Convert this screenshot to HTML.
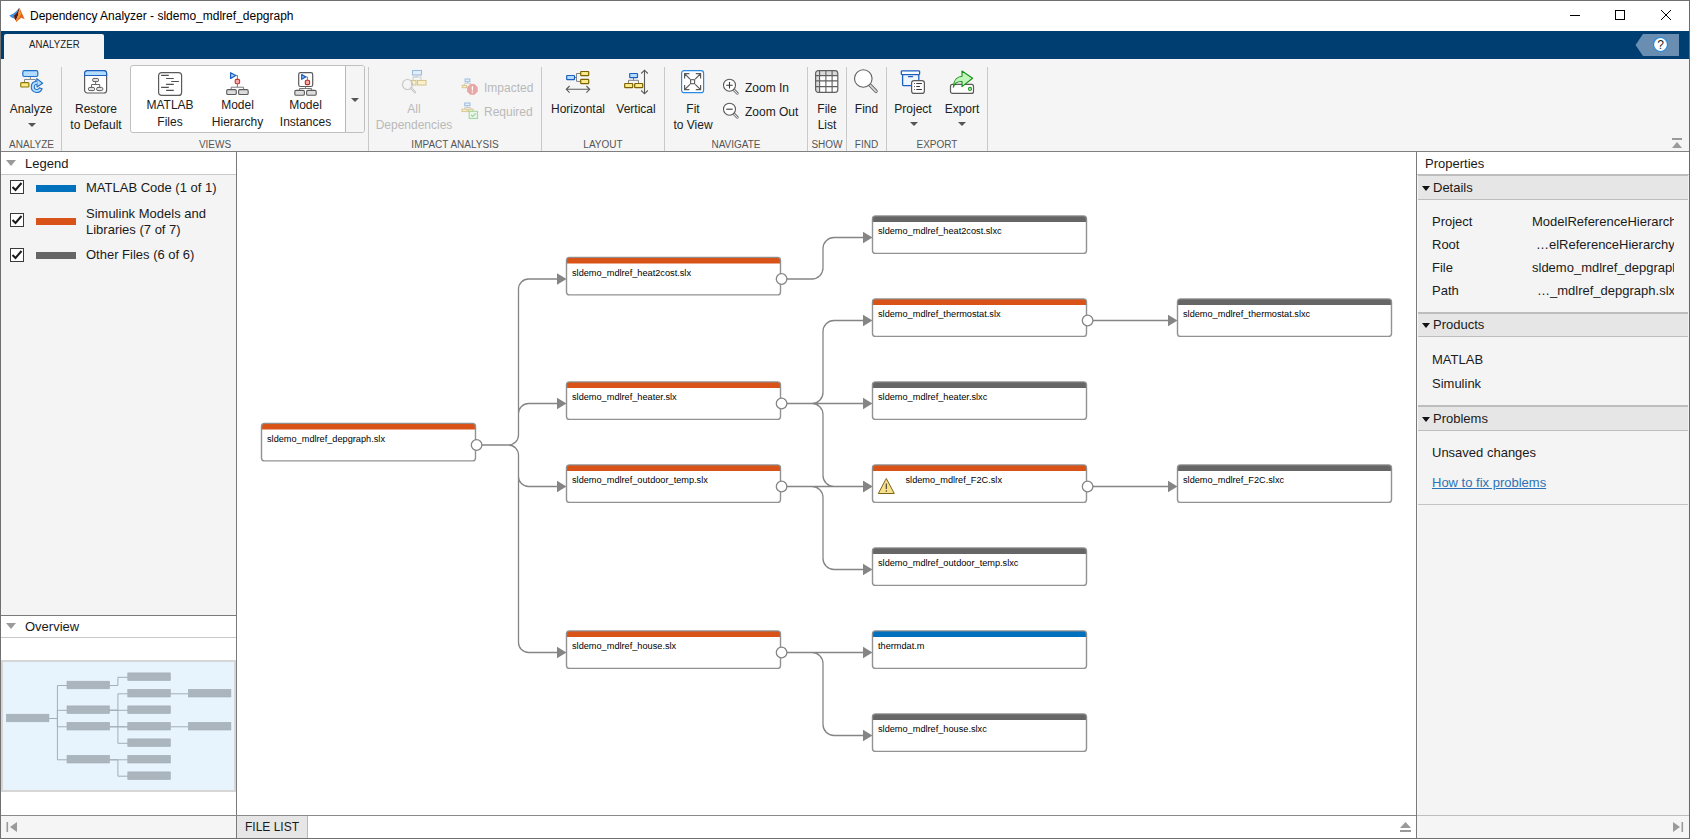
<!DOCTYPE html>
<html><head><meta charset="utf-8">
<style>
*{margin:0;padding:0;box-sizing:border-box}
html,body{width:1690px;height:839px;overflow:hidden;background:#fff}
body{position:relative;font-family:"Liberation Sans",sans-serif;color:#1a1a1a}
.a{position:absolute}
.t{position:absolute;white-space:nowrap;line-height:1}
.lbl{position:absolute;white-space:nowrap;font-size:12px;line-height:16px;text-align:center;color:#202020}
.grp{position:absolute;top:138px;font-size:10px;line-height:14px;color:#555;white-space:nowrap;text-align:center}
.sep{position:absolute;top:67px;width:1px;height:84px;background:#c9c9c9}
.dd{position:absolute;width:0;height:0;border-left:4px solid transparent;border-right:4px solid transparent;border-top:4px solid #555}
svg{position:absolute;overflow:visible}
</style></head><body>

<!-- window frame -->
<div class="a" style="left:0;top:0;width:1690px;height:839px;border:1px solid #707070;border-right-color:#6a6a6a"></div>

<!-- title bar -->
<svg style="left:6px;top:4px" width="24" height="22" viewBox="0 0 24 22">
 <polygon points="3.3,11.4 7.5,9.6 10.5,7 12.9,4.3 11,8.6 8,11.6 8.4,14.6 5.5,13.6" fill="#3d8fdb"/>
 <polygon points="8,11.6 11,8.6 12.9,4.3 13.5,3.8 12,11.5 9.8,16.5 8.4,14.6" fill="#5a1a1a"/>
 <polygon points="13.5,3.8 18.7,15.3 15.2,13.8 10.2,17.9 9.8,16.5 12,11.5" fill="#e3641e"/>
 <polygon points="13.5,3.8 15,10 12.8,14.2 10.2,17.9 12,11.5" fill="#f09a35"/>
</svg>
<div class="t" style="left:30px;top:10px;font-size:12px;color:#000">Dependency Analyzer - sldemo_mdlref_depgraph</div>
<div class="a" style="left:1570px;top:15px;width:10px;height:1px;background:#000"></div>
<div class="a" style="left:1615px;top:10px;width:10px;height:10px;border:1px solid #000"></div>
<svg style="left:1661px;top:10px" width="10" height="10"><path d="M0,0L10,10M10,0L0,10" stroke="#000" stroke-width="1"/></svg>

<!-- blue band -->
<div class="a" style="left:1px;top:31px;width:1688px;height:28px;background:#003e72"></div>
<div class="a" style="left:4px;top:34px;width:100px;height:25px;background:#f5f5f5;border-radius:2px 2px 0 0"></div>
<div class="t" style="left:29px;top:39.3px;font-size:11px;letter-spacing:0.1px;color:#222;transform:scaleX(0.875);transform-origin:0 0">ANALYZER</div>
<svg style="left:1635px;top:34px" width="44" height="23"><polygon points="0.5,11 8,0 44,0 44,22 8,22" fill="#6a8eb1"/>
 <circle cx="25.5" cy="10.5" r="7" fill="#fff" stroke="#1e88e5" stroke-width="1.2"/>
 <text x="25.5" y="15" font-size="12" text-anchor="middle" fill="#222" font-family="Liberation Sans">?</text></svg>

<!-- toolstrip -->
<div class="a" style="left:1px;top:59px;width:1688px;height:92px;background:#f5f5f5"></div>
<div class="a" style="left:1px;top:151px;width:1688px;height:1px;background:#808080"></div>


<!-- separators -->
<div class="sep" style="left:61px"></div>
<div class="sep" style="left:368px"></div>
<div class="sep" style="left:541px"></div>
<div class="sep" style="left:664px"></div>
<div class="sep" style="left:807px"></div>
<div class="sep" style="left:846px"></div>
<div class="sep" style="left:886px"></div>
<div class="sep" style="left:987px"></div>

<!-- group labels -->
<div class="grp" style="left:1px;width:61px">ANALYZE</div>
<div class="grp" style="left:62px;width:306px">VIEWS</div>
<div class="grp" style="left:369px;width:172px">IMPACT ANALYSIS</div>
<div class="grp" style="left:542px;width:122px">LAYOUT</div>
<div class="grp" style="left:665px;width:142px">NAVIGATE</div>
<div class="grp" style="left:808px;width:38px">SHOW</div>
<div class="grp" style="left:847px;width:39px">FIND</div>
<div class="grp" style="left:887px;width:100px">EXPORT</div>

<!-- gallery -->
<div class="a" style="left:130px;top:65px;width:235px;height:68px;background:#fff;border:1px solid #c0c0c0;border-radius:3px"></div>
<div class="a" style="left:345px;top:66px;width:19px;height:66px;background:#f5f5f5;border-left:1px solid #b8b8b8;border-radius:0 2px 2px 0"></div>
<div class="dd" style="left:351px;top:98px"></div>

<!-- labels -->
<div class="lbl" style="left:1px;width:60px;top:101px;line-height:16px">Analyze</div>
<div class="dd" style="left:28px;top:123px"></div>
<div class="lbl" style="left:66px;width:60px;top:101px;line-height:16px">Restore<br>to Default</div>
<div class="lbl" style="left:140px;width:60px;top:97px;line-height:16.5px">MATLAB<br>Files</div>
<div class="lbl" style="left:204px;width:67px;top:97px;line-height:16.5px">Model<br>Hierarchy</div>
<div class="lbl" style="left:272px;width:67px;top:97px;line-height:16.5px">Model<br>Instances</div>
<div class="lbl" style="left:374px;width:80px;top:101px;line-height:16px;color:#b9b9b9">All<br>Dependencies</div>
<div class="lbl" style="left:484px;top:80px;text-align:left;color:#b9b9b9">Impacted</div>
<div class="lbl" style="left:484px;top:104px;text-align:left;color:#b9b9b9">Required</div>
<div class="lbl" style="left:548px;width:60px;top:101px;line-height:16px">Horizontal</div>
<div class="lbl" style="left:610px;width:52px;top:101px;line-height:16px">Vertical</div>
<div class="lbl" style="left:668px;width:50px;top:101px;line-height:16px">Fit<br>to View</div>
<div class="lbl" style="left:745px;top:80px;text-align:left">Zoom In</div>
<div class="lbl" style="left:745px;top:104px;text-align:left">Zoom Out</div>
<div class="lbl" style="left:808px;width:38px;top:101px;line-height:16px">File<br>List</div>
<div class="lbl" style="left:847px;width:39px;top:101px;line-height:16px">Find</div>
<div class="lbl" style="left:888px;width:50px;top:101px;line-height:16px">Project</div>
<div class="dd" style="left:910px;top:122px"></div>
<div class="lbl" style="left:937px;width:50px;top:101px;line-height:16px">Export</div>
<div class="dd" style="left:958px;top:122px"></div>

<!-- collapse -->
<div class="a" style="left:1672px;top:138px;width:10px;height:2px;background:#9a9a9a"></div>
<div class="a" style="left:1672px;top:142px;width:0;height:0;border-left:5px solid transparent;border-right:5px solid transparent;border-bottom:6px solid #9a9a9a"></div>

<!-- icons -->
<svg style="left:16px;top:66px" width="32" height="32" viewBox="0 0 32 32">
 <path d="M14.4,10.5V13.5H8.5V16.5M14.4,13.5H19.5V16" fill="none" stroke="#8a8a8a" stroke-width="1"/>
 <rect x="6.8" y="4.7" width="15" height="5.8" rx="1.5" fill="#b3ddff" stroke="#1f6fc5" stroke-width="1.2"/>
 <rect x="4.7" y="16.6" width="8.2" height="4.4" rx="1" fill="#fbeb8a" stroke="#8b7400" stroke-width="1.1"/>
 <path d="M20.5,15.2A5.6,5.6 0 1 0 26.1,22.8L23.2,21.9A2.6,2.6 0 1 1 20.5,18.3Z" fill="#b3ddff" stroke="#1f6fc5" stroke-width="1.1" stroke-linejoin="round"/>
 <polygon points="20.8,12.6 26.6,17.3 21,21" fill="#b3ddff" stroke="#1f6fc5" stroke-width="1.1" stroke-linejoin="round"/>
 <path d="M20.6,15.6V17.8" stroke="#b3ddff" stroke-width="1.3"/>
</svg>
<svg style="left:84px;top:70px" width="24" height="24" viewBox="0 0 24 24">
 <rect x="0.6" y="0.6" width="22" height="22.4" rx="2.8" fill="#fff" stroke="#5a5a5a" stroke-width="1.2"/>
 <path d="M0.6,5.5V3.4A2.8,2.8 0 0 1 3.4,0.6H19.8A2.8,2.8 0 0 1 22.6,3.4V5.5Z" fill="#b3ddff" stroke="#1f5fbf" stroke-width="1.2"/>
 <rect x="8.6" y="8.4" width="6" height="3.2" rx="1.4" fill="#e4e4e4" stroke="#5a5a5a" stroke-width="1"/>
 <path d="M11.6,11.6V14.5M7.5,17.4V14.5H15.7V17.4" fill="none" stroke="#6a6a6a" stroke-width="1"/>
 <rect x="4.4" y="17.4" width="6.2" height="3.2" rx="1.4" fill="#e4e4e4" stroke="#5a5a5a" stroke-width="1"/>
 <rect x="12.6" y="17.4" width="6.2" height="3.2" rx="1.4" fill="#e4e4e4" stroke="#5a5a5a" stroke-width="1"/>
</svg>
<svg style="left:158px;top:72px" width="24" height="24" viewBox="0 0 24 24">
 <rect x="0.6" y="0.6" width="23" height="22.8" rx="3" fill="#fff" stroke="#5a5a5a" stroke-width="1.2"/>
 <path d="M3.1,3.4H10.8M8.1,6.5H15.8M13.2,9.5H20.9M8.1,12.4H15.8M3.1,15.4H10.8M8.1,18.4H15.8" stroke="#505050" stroke-width="1.1"/>
</svg>
<svg style="left:226px;top:72px" width="24" height="24" viewBox="0 0 24 24">
 <path d="M10.2,3.4H11.4V7.2M11.4,12V15.2M5.2,17.3V15.2H17.6V17.3" fill="none" stroke="#7a7a7a" stroke-width="1"/>
 <polygon points="4.6,0.8 4.6,6.4 9.8,3.5" fill="#b3ddff" stroke="#1f5fbf" stroke-width="1.3" stroke-linejoin="round"/>
 <rect x="9.2" y="7.4" width="4.4" height="4.4" rx="1.2" fill="#f7a8a8" stroke="#c0392b" stroke-width="1.1"/>
 <rect x="0.7" y="17.6" width="9.6" height="4.9" rx="1.3" fill="#dcdcdc" stroke="#5a5a5a" stroke-width="1.1"/>
 <rect x="12.6" y="17.6" width="9.6" height="4.9" rx="1.3" fill="#dcdcdc" stroke="#5a5a5a" stroke-width="1.1"/>
</svg>
<svg style="left:294px;top:72px" width="24" height="24" viewBox="0 0 24 24">
 <rect x="4.7" y="0.7" width="14" height="13.8" rx="1.8" fill="#fff" stroke="#5a5a5a" stroke-width="1.2"/>
 <path d="M11.6,4.9H13.4V8.2M11.6,14.5V16.5M5.5,18.2V16.5H17.6V18.2" fill="none" stroke="#7a7a7a" stroke-width="1"/>
 <polygon points="7.7,2.6 7.7,7.3 11.6,4.9" fill="#b3ddff" stroke="#1f5fbf" stroke-width="1.3" stroke-linejoin="round"/>
 <rect x="11.3" y="8.3" width="4.3" height="4.3" rx="1.2" fill="#f7a8a8" stroke="#b03020" stroke-width="1.1"/>
 <rect x="0.8" y="18.4" width="9.6" height="4.9" rx="1.3" fill="#dcdcdc" stroke="#5a5a5a" stroke-width="1.1"/>
 <rect x="12.6" y="18.4" width="9.6" height="4.9" rx="1.3" fill="#dcdcdc" stroke="#5a5a5a" stroke-width="1.1"/>
</svg>
<svg style="left:401px;top:70px" width="26" height="26" viewBox="0 0 26 26">
 <rect x="11.5" y="0.5" width="9" height="4.5" fill="#e3effa" stroke="#9bbde0" stroke-width="1.1"/>
 <path d="M16,5V7H12V10M20,7V10M12,7H20" fill="none" stroke="#cfcfcf"/>
 <rect x="10.5" y="10.5" width="4.5" height="4.5" fill="#fbf1cc" stroke="#d6c690" stroke-width="1.1"/>
 <rect x="16.5" y="10.5" width="8.5" height="4.5" fill="#fbf1cc" stroke="#d6c690" stroke-width="1.1"/>
 <circle cx="6.5" cy="14.5" r="5" fill="none" stroke="#c4c4c4" stroke-width="1.1"/>
 <path d="M10,18L14,22.3" stroke="#c4c4c4" stroke-width="2.4" stroke-linecap="round"/>
 <path d="M10,18L14,22.3" stroke="#f0f0f0" stroke-width="0.8" stroke-linecap="round"/>
</svg>
<svg style="left:461px;top:78px" width="18" height="18" viewBox="0 0 18 18">
 <path d="M6.5,3.7V5.3M3.3,7.4V5.3H9.6V6.5" fill="none" stroke="#cfcfcf" stroke-width="1"/>
 <rect x="4.1" y="1" width="4.7" height="2.7" fill="#e3effa" stroke="#9bbde0" stroke-width="1"/>
 <rect x="1.2" y="7.4" width="4.4" height="2.3" fill="#fbf1cc" stroke="#d6c690" stroke-width="1"/>
 <polygon points="9.2,6.1 13.6,6.1 16.7,9.2 16.7,13.6 13.6,16.7 9.2,16.7 6.1,13.6 6.1,9.2" fill="#e8a6a6"/>
 <path d="M11.4,8.3V12.4M11.4,13.6V14.8" stroke="#fff" stroke-width="1.3"/>
</svg>
<svg style="left:461px;top:102px" width="18" height="18" viewBox="0 0 18 18">
 <path d="M6.3,3.7V5.5M3.5,7.2V5.5H9.7V7.2" fill="none" stroke="#cfcfcf" stroke-width="1"/>
 <rect x="3.7" y="1" width="5.3" height="2.7" fill="#e3effa" stroke="#9bbde0" stroke-width="1"/>
 <rect x="1" y="7.2" width="5.1" height="2.4" fill="#fbf1cc" stroke="#d6c690" stroke-width="1"/>
 <rect x="7.3" y="7.2" width="4.7" height="2.4" fill="#fbf1cc" stroke="#d6c690" stroke-width="1"/>
 <rect x="8.2" y="9.3" width="8.3" height="7.2" fill="#e9f6e9" stroke="#a3d6a3" stroke-width="1.1"/>
 <path d="M10,12.8L11.8,14.5L14.8,11.3" fill="none" stroke="#9ad09a" stroke-width="1.1"/>
</svg>
<svg style="left:565px;top:70px" width="26" height="24" viewBox="0 0 26 24">
 <path d="M9.6,7.5H11.5M11.5,3.5V11.4M11.5,3.5H15.2M11.5,11.4H15.2" fill="none" stroke="#808080" stroke-width="1"/>
 <rect x="1.7" y="5.5" width="7.8" height="4.2" rx="0.6" fill="#b3ddff" stroke="#1f5fbf" stroke-width="1.2"/>
 <rect x="15.7" y="1.5" width="8" height="4.2" rx="0.6" fill="#fbe98a" stroke="#7a6300" stroke-width="1.2"/>
 <rect x="15.7" y="9.4" width="8" height="4.2" rx="0.6" fill="#fbe98a" stroke="#7a6300" stroke-width="1.2"/>
 <path d="M1.3,19.3H24.7M4.6,16L1.3,19.3L4.6,22.6M21.4,16L24.7,19.3L21.4,22.6" fill="none" stroke="#5a5a5a" stroke-width="1.1"/>
</svg>
<svg style="left:623px;top:69px" width="26" height="26" viewBox="0 0 26 26">
 <path d="M10.5,8.8V11.3M5.5,14.3V11.3H15.5V14.3" fill="none" stroke="#808080" stroke-width="1"/>
 <rect x="6.7" y="4.5" width="7.8" height="4.2" rx="0.6" fill="#b3ddff" stroke="#1f5fbf" stroke-width="1.2"/>
 <rect x="1.7" y="14.5" width="8" height="4.2" rx="0.6" fill="#fbe98a" stroke="#7a6300" stroke-width="1.2"/>
 <rect x="11.7" y="14.5" width="8" height="4.2" rx="0.6" fill="#fbe98a" stroke="#7a6300" stroke-width="1.2"/>
 <path d="M21.5,1.2V24.8M18.2,4.5L21.5,1.2L24.8,4.5M18.2,21.5L21.5,24.8L24.8,21.5" fill="none" stroke="#5a5a5a" stroke-width="1.1"/>
</svg>
<svg style="left:680px;top:70px" width="25" height="24" viewBox="0 0 25 24">
 <rect x="1.6" y="0.7" width="22" height="22" rx="2.5" fill="#fff" stroke="#2a8ae6" stroke-width="1.2"/>
 <rect x="10.6" y="9.7" width="4" height="4" fill="none" stroke="#5a5a5a" stroke-width="1.1"/>
 <path d="M4.6,3.7L10,9.1M20.6,3.7L15.2,9.1M4.6,19.7L10,14.3M20.6,19.7L15.2,14.3M4.6,8.5V3.7H9.4M15.8,3.7H20.6V8.5M4.6,14.9V19.7H9.4M15.8,19.7H20.6V14.9" fill="none" stroke="#5a5a5a" stroke-width="1.2"/>
</svg>
<svg style="left:722px;top:78px" width="18" height="18" viewBox="0 0 18 18">
 <path d="M11.8,11.8L15.3,15.3" stroke="#6a6a6a" stroke-width="2.8" stroke-linecap="round"/>
 <path d="M11.8,11.8L15.3,15.3" stroke="#e6e6e6" stroke-width="1.1" stroke-linecap="round"/>
 <circle cx="7.5" cy="7.2" r="6" fill="#fff" stroke="#5a5a5a" stroke-width="1.1"/>
 <path d="M7.5,4V10.4M4.3,7.2H10.7" stroke="#3a3a3a" stroke-width="1.1"/>
</svg>
<svg style="left:722px;top:102px" width="18" height="18" viewBox="0 0 18 18">
 <path d="M11.8,11.8L15.3,15.3" stroke="#6a6a6a" stroke-width="2.8" stroke-linecap="round"/>
 <path d="M11.8,11.8L15.3,15.3" stroke="#e6e6e6" stroke-width="1.1" stroke-linecap="round"/>
 <circle cx="7.5" cy="7.2" r="6" fill="#fff" stroke="#5a5a5a" stroke-width="1.1"/>
 <path d="M4.3,7.2H10.7" stroke="#3a3a3a" stroke-width="1.1"/>
</svg>
<svg style="left:815px;top:70px" width="24" height="24" viewBox="0 0 24 24">
 <rect x="0.6" y="0.6" width="22.2" height="21.8" rx="2.8" fill="#fff"/>
 <path d="M0.6,5.6V3.4A2.8,2.8 0 0 1 3.4,0.6H20A2.8,2.8 0 0 1 22.8,3.4V5.6Z" fill="#d9d9d9"/>
 <path d="M0.6,3.4V19.6A2.8,2.8 0 0 0 3.4,22.4H4.6V0.6H3.4A2.8,2.8 0 0 0 0.6,3.4Z" fill="#d9d9d9"/>
 <path d="M0.6,5.6H22.8M0.6,10.9H22.8M0.6,16.6H22.8M4.6,0.6V22.4M10.9,0.6V22.4M17.1,0.6V22.4" stroke="#606060" stroke-width="1.1"/>
 <rect x="0.6" y="0.6" width="22.2" height="21.8" rx="2.8" fill="none" stroke="#606060" stroke-width="1.2"/>
</svg>
<svg style="left:853px;top:68px" width="28" height="28" viewBox="0 0 28 28">
 <path d="M17,17L23,23.3" stroke="#6a6a6a" stroke-width="3.6" stroke-linecap="round"/>
 <path d="M17,17L23,23.3" stroke="#d8d8d8" stroke-width="1.8" stroke-linecap="round"/>
 <circle cx="10.3" cy="10.5" r="8.8" fill="#fff" stroke="#606060" stroke-width="1.1"/>
</svg>
<svg style="left:900px;top:70px" width="26" height="25" viewBox="0 0 26 25">
 <rect x="2.6" y="4.4" width="16.2" height="11.2" rx="0.8" fill="#f0f6fd" stroke="#1f5fbf" stroke-width="1.3"/>
 <rect x="1.3" y="0.8" width="18.3" height="3.8" rx="0.8" fill="#fff" stroke="#1f5fbf" stroke-width="1.3"/>
 <path d="M8.4,6.6H12.6" stroke="#1f5fbf" stroke-width="1.2" stroke-linecap="round"/>
 <rect x="11.6" y="10.6" width="12.8" height="12.8" rx="2.5" fill="#fff" stroke="#5a5a5a" stroke-width="1.2"/>
 <path d="M14,13.5H14.8M14,16.5H14.8M14,19.5H14.8M16.3,13.5H21.9M16.3,16.5H19.9M16.3,19.5H21.9" stroke="#3a3a3a" stroke-width="1.1"/>
</svg>
<svg style="left:949px;top:70px" width="26" height="25" viewBox="0 0 26 25">
 <rect x="1.5" y="14.4" width="23" height="9" rx="2" fill="#fff" stroke="#5a5a5a" stroke-width="1.2"/>
 <circle cx="21" cy="18.9" r="1.5" fill="#c8f0c0" stroke="#1e9a1e" stroke-width="1.1"/>
 <path d="M4.3,17.3C4.5,10 8.5,6.5 13,6.2V1L23.6,8.3L13,16.6V11.5C9,11.3 5.5,13 4.3,17.3Z" fill="#c2f5bc" stroke="#169016" stroke-width="1.1" stroke-linejoin="round"/>
</svg>



<!-- ===== left panel ===== -->
<div class="a" style="left:1px;top:152px;width:235px;height:22px;background:#fff"></div>
<div class="a" style="left:1px;top:174px;width:235px;height:1px;background:#c8c8c8"></div>
<div class="a" style="left:1px;top:175px;width:235px;height:440px;background:#f4f4f4"></div>
<div class="a" style="left:6px;top:160px;width:0;height:0;border-left:5px solid transparent;border-right:5px solid transparent;border-top:6px solid #9a9a9a"></div>
<div class="t" style="left:25px;top:157px;font-size:13px;color:#1a1a1a">Legend</div>

<div class="a" style="left:10px;top:180px;width:14px;height:14px;border:1px solid #3a3a3a;background:#fff"></div>
<svg style="left:10px;top:180px" width="14" height="14"><path d="M2.5,7L5.5,10L11.5,3" fill="none" stroke="#1a1a1a" stroke-width="2"/></svg>
<div class="a" style="left:36px;top:185px;width:40px;height:7px;background:#0072bd"></div>
<div class="t" style="left:86px;top:181px;font-size:13px">MATLAB Code (1 of 1)</div>

<div class="a" style="left:10px;top:213px;width:14px;height:14px;border:1px solid #3a3a3a;background:#fff"></div>
<svg style="left:10px;top:213px" width="14" height="14"><path d="M2.5,7L5.5,10L11.5,3" fill="none" stroke="#1a1a1a" stroke-width="2"/></svg>
<div class="a" style="left:36px;top:218px;width:40px;height:7px;background:#d95319"></div>
<div class="t" style="left:86px;top:205.5px;font-size:13px;line-height:16px">Simulink Models and<br>Libraries (7 of 7)</div>

<div class="a" style="left:10px;top:248px;width:14px;height:14px;border:1px solid #3a3a3a;background:#fff"></div>
<svg style="left:10px;top:248px" width="14" height="14"><path d="M2.5,7L5.5,10L11.5,3" fill="none" stroke="#1a1a1a" stroke-width="2"/></svg>
<div class="a" style="left:36px;top:252px;width:40px;height:7px;background:#666"></div>
<div class="t" style="left:86px;top:248px;font-size:13px">Other Files (6 of 6)</div>

<div class="a" style="left:1px;top:615px;width:235px;height:1px;background:#7a7a7a"></div>
<div class="a" style="left:1px;top:616px;width:235px;height:21px;background:#fff"></div>
<div class="a" style="left:1px;top:637px;width:235px;height:1px;background:#c8c8c8"></div>
<div class="a" style="left:6px;top:623px;width:0;height:0;border-left:5px solid transparent;border-right:5px solid transparent;border-top:6px solid #9a9a9a"></div>
<div class="t" style="left:25px;top:620px;font-size:13px;color:#1a1a1a">Overview</div>
<div class="a" style="left:1px;top:660px;width:235px;height:132px;background:#e8f4fd;border:2px solid #d6d6d6"></div>
<svg style="left:0;top:0" width="240" height="839"><path d="M48.9,718.5H57.4V685.5H67.0 M48.9,718.5H57.4V710.3H67.0 M48.9,718.5H57.4V726.8H67.0 M48.9,718.5H57.4V759.8H67.0 M109.5,685.5H117.9V677.3H127.8 M109.5,710.3H117.9V693.8H127.8 M109.5,710.3H117.9V710.3H127.8 M109.5,710.3H117.9V726.8H127.8 M109.5,726.8H117.9V726.8H127.8 M109.5,726.8H117.9V743.3H127.8 M109.5,759.8H117.9V759.8H127.8 M109.5,759.8H117.9V776.2H127.8 M170.3,693.8H188.4 M170.3,726.8H188.4" fill="none" stroke="#a3aeb7" stroke-width="1"/>
<rect x="6.4" y="714.2" width="42.5" height="7.6" fill="#aab5be" stroke="#a0abb4" stroke-width="0.6"/>
<rect x="67.0" y="681.2" width="42.5" height="7.6" fill="#aab5be" stroke="#a0abb4" stroke-width="0.6"/>
<rect x="67.0" y="705.9" width="42.5" height="7.6" fill="#aab5be" stroke="#a0abb4" stroke-width="0.6"/>
<rect x="67.0" y="722.4" width="42.5" height="7.6" fill="#aab5be" stroke="#a0abb4" stroke-width="0.6"/>
<rect x="67.0" y="755.4" width="42.5" height="7.6" fill="#aab5be" stroke="#a0abb4" stroke-width="0.6"/>
<rect x="127.8" y="672.9" width="42.5" height="7.6" fill="#aab5be" stroke="#a0abb4" stroke-width="0.6"/>
<rect x="127.8" y="689.4" width="42.5" height="7.6" fill="#aab5be" stroke="#a0abb4" stroke-width="0.6"/>
<rect x="127.8" y="705.9" width="42.5" height="7.6" fill="#aab5be" stroke="#a0abb4" stroke-width="0.6"/>
<rect x="127.8" y="722.4" width="42.5" height="7.6" fill="#aab5be" stroke="#a0abb4" stroke-width="0.6"/>
<rect x="127.8" y="738.9" width="42.5" height="7.6" fill="#aab5be" stroke="#a0abb4" stroke-width="0.6"/>
<rect x="127.8" y="755.4" width="42.5" height="7.6" fill="#aab5be" stroke="#a0abb4" stroke-width="0.6"/>
<rect x="127.8" y="771.9" width="42.5" height="7.6" fill="#aab5be" stroke="#a0abb4" stroke-width="0.6"/>
<rect x="188.4" y="689.4" width="42.5" height="7.6" fill="#aab5be" stroke="#a0abb4" stroke-width="0.6"/>
<rect x="188.4" y="722.4" width="42.5" height="7.6" fill="#aab5be" stroke="#a0abb4" stroke-width="0.6"/></svg>

<div class="a" style="left:236px;top:152px;width:1px;height:686px;background:#7a7a7a"></div>

<!-- ===== graph ===== -->
<svg style="left:0;top:0" width="1690" height="839" font-family="Liberation Sans"><path d="M475.5,445H508.5A10,10 0 0 0 518.5,435V289A10,10 0 0 1 528.5,279H557.0 M475.5,445H508.5A10,10 0 0 0 518.5,435V413.5A10,10 0 0 1 528.5,403.5H557.0 M475.5,445H508.5A10,10 0 0 1 518.5,455V476.5A10,10 0 0 0 528.5,486.5H557.0 M475.5,445H508.5A10,10 0 0 1 518.5,455V642.5A10,10 0 0 0 528.5,652.5H557.0 M780.5,279H812A11,11 0 0 0 823,268V248.5A11,11 0 0 1 834,237.5H863.0 M780.5,403.5H812A11,11 0 0 0 823,392.5V331.5A11,11 0 0 1 834,320.5H863.0 M780.5,403.5H863.0 M780.5,403.5H812A11,11 0 0 1 823,414.5V475.5A11,11 0 0 0 834,486.5H863.0 M780.5,486.5H863.0 M780.5,486.5H812A11,11 0 0 1 823,497.5V558.5A11,11 0 0 0 834,569.5H863.0 M780.5,652.5H863.0 M780.5,652.5H812A11,11 0 0 1 823,663.5V724.5A11,11 0 0 0 834,735.5H863.0 M1086.5,320.5H1168.0 M1086.5,486.5H1168.0" fill="none" stroke="#858585" stroke-width="1.3"/>
<polygon points="566.5,279 557.0,273.2 557.0,284.8" fill="#858585"/>
<polygon points="566.5,403.5 557.0,397.7 557.0,409.3" fill="#858585"/>
<polygon points="566.5,486.5 557.0,480.7 557.0,492.3" fill="#858585"/>
<polygon points="566.5,652.5 557.0,646.7 557.0,658.3" fill="#858585"/>
<polygon points="872.5,237.5 863.0,231.7 863.0,243.3" fill="#858585"/>
<polygon points="872.5,320.5 863.0,314.7 863.0,326.3" fill="#858585"/>
<polygon points="872.5,403.5 863.0,397.7 863.0,409.3" fill="#858585"/>
<polygon points="872.5,486.5 863.0,480.7 863.0,492.3" fill="#858585"/>
<polygon points="872.5,486.5 863.0,480.7 863.0,492.3" fill="#858585"/>
<polygon points="872.5,569.5 863.0,563.7 863.0,575.3" fill="#858585"/>
<polygon points="872.5,652.5 863.0,646.7 863.0,658.3" fill="#858585"/>
<polygon points="872.5,735.5 863.0,729.7 863.0,741.3" fill="#858585"/>
<polygon points="1177.5,320.5 1168.0,314.7 1168.0,326.3" fill="#858585"/>
<polygon points="1177.5,486.5 1168.0,480.7 1168.0,492.3" fill="#858585"/>
<rect x="261.5" y="423.4" width="214" height="37.5" rx="3" fill="#fff"/>
<path d="M261.5,429.5V426.4A3,3 0 0 1 264.5,423.4H472.5A3,3 0 0 1 475.5,426.4V429.5Z" fill="#d95319"/>
<rect x="261.5" y="423.4" width="214" height="37.5" rx="3" fill="none" stroke="#8c8c8c" stroke-width="1.4" stroke-opacity="0.95"/>
<text x="267.0" y="441.7" font-size="9.2" fill="#000">sldemo_mdlref_depgraph.slx</text>
<rect x="566.5" y="257.4" width="214" height="37.5" rx="3" fill="#fff"/>
<path d="M566.5,263.5V260.4A3,3 0 0 1 569.5,257.4H777.5A3,3 0 0 1 780.5,260.4V263.5Z" fill="#d95319"/>
<rect x="566.5" y="257.4" width="214" height="37.5" rx="3" fill="none" stroke="#8c8c8c" stroke-width="1.4" stroke-opacity="0.95"/>
<text x="572.0" y="275.7" font-size="9.2" fill="#000">sldemo_mdlref_heat2cost.slx</text>
<rect x="566.5" y="381.9" width="214" height="37.5" rx="3" fill="#fff"/>
<path d="M566.5,388.0V384.9A3,3 0 0 1 569.5,381.9H777.5A3,3 0 0 1 780.5,384.9V388.0Z" fill="#d95319"/>
<rect x="566.5" y="381.9" width="214" height="37.5" rx="3" fill="none" stroke="#8c8c8c" stroke-width="1.4" stroke-opacity="0.95"/>
<text x="572.0" y="400.2" font-size="9.2" fill="#000">sldemo_mdlref_heater.slx</text>
<rect x="566.5" y="464.9" width="214" height="37.5" rx="3" fill="#fff"/>
<path d="M566.5,471.0V467.9A3,3 0 0 1 569.5,464.9H777.5A3,3 0 0 1 780.5,467.9V471.0Z" fill="#d95319"/>
<rect x="566.5" y="464.9" width="214" height="37.5" rx="3" fill="none" stroke="#8c8c8c" stroke-width="1.4" stroke-opacity="0.95"/>
<text x="572.0" y="483.2" font-size="9.2" fill="#000">sldemo_mdlref_outdoor_temp.slx</text>
<rect x="566.5" y="630.9" width="214" height="37.5" rx="3" fill="#fff"/>
<path d="M566.5,637.0V633.9A3,3 0 0 1 569.5,630.9H777.5A3,3 0 0 1 780.5,633.9V637.0Z" fill="#d95319"/>
<rect x="566.5" y="630.9" width="214" height="37.5" rx="3" fill="none" stroke="#8c8c8c" stroke-width="1.4" stroke-opacity="0.95"/>
<text x="572.0" y="649.2" font-size="9.2" fill="#000">sldemo_mdlref_house.slx</text>
<rect x="872.5" y="215.9" width="214" height="37.5" rx="3" fill="#fff"/>
<path d="M872.5,222.0V218.9A3,3 0 0 1 875.5,215.9H1083.5A3,3 0 0 1 1086.5,218.9V222.0Z" fill="#666666"/>
<rect x="872.5" y="215.9" width="214" height="37.5" rx="3" fill="none" stroke="#8c8c8c" stroke-width="1.4" stroke-opacity="0.95"/>
<text x="878.0" y="234.2" font-size="9.2" fill="#000">sldemo_mdlref_heat2cost.slxc</text>
<rect x="872.5" y="298.9" width="214" height="37.5" rx="3" fill="#fff"/>
<path d="M872.5,305.0V301.9A3,3 0 0 1 875.5,298.9H1083.5A3,3 0 0 1 1086.5,301.9V305.0Z" fill="#d95319"/>
<rect x="872.5" y="298.9" width="214" height="37.5" rx="3" fill="none" stroke="#8c8c8c" stroke-width="1.4" stroke-opacity="0.95"/>
<text x="878.0" y="317.2" font-size="9.2" fill="#000">sldemo_mdlref_thermostat.slx</text>
<rect x="872.5" y="381.9" width="214" height="37.5" rx="3" fill="#fff"/>
<path d="M872.5,388.0V384.9A3,3 0 0 1 875.5,381.9H1083.5A3,3 0 0 1 1086.5,384.9V388.0Z" fill="#666666"/>
<rect x="872.5" y="381.9" width="214" height="37.5" rx="3" fill="none" stroke="#8c8c8c" stroke-width="1.4" stroke-opacity="0.95"/>
<text x="878.0" y="400.2" font-size="9.2" fill="#000">sldemo_mdlref_heater.slxc</text>
<rect x="872.5" y="464.9" width="214" height="37.5" rx="3" fill="#fff"/>
<path d="M872.5,471.0V467.9A3,3 0 0 1 875.5,464.9H1083.5A3,3 0 0 1 1086.5,467.9V471.0Z" fill="#d95319"/>
<rect x="872.5" y="464.9" width="214" height="37.5" rx="3" fill="none" stroke="#8c8c8c" stroke-width="1.4" stroke-opacity="0.95"/>
<g transform="translate(877.5,477.5)"><polygon points="8.8,1 16.8,16 0.8,16" fill="#f8e08a" stroke="#7a6518" stroke-width="1" stroke-linejoin="round"/><path d="M8.8,6V11.5M8.8,12.8V14.2" stroke="#3a3a3a" stroke-width="1.1"/></g>
<text x="905.5" y="483.2" font-size="9.2" fill="#000">sldemo_mdlref_F2C.slx</text>
<rect x="872.5" y="547.9" width="214" height="37.5" rx="3" fill="#fff"/>
<path d="M872.5,554.0V550.9A3,3 0 0 1 875.5,547.9H1083.5A3,3 0 0 1 1086.5,550.9V554.0Z" fill="#666666"/>
<rect x="872.5" y="547.9" width="214" height="37.5" rx="3" fill="none" stroke="#8c8c8c" stroke-width="1.4" stroke-opacity="0.95"/>
<text x="878.0" y="566.2" font-size="9.2" fill="#000">sldemo_mdlref_outdoor_temp.slxc</text>
<rect x="872.5" y="630.9" width="214" height="37.5" rx="3" fill="#fff"/>
<path d="M872.5,637.0V633.9A3,3 0 0 1 875.5,630.9H1083.5A3,3 0 0 1 1086.5,633.9V637.0Z" fill="#0072bd"/>
<rect x="872.5" y="630.9" width="214" height="37.5" rx="3" fill="none" stroke="#8c8c8c" stroke-width="1.4" stroke-opacity="0.95"/>
<text x="878.0" y="649.2" font-size="9.2" fill="#000">thermdat.m</text>
<rect x="872.5" y="713.9" width="214" height="37.5" rx="3" fill="#fff"/>
<path d="M872.5,720.0V716.9A3,3 0 0 1 875.5,713.9H1083.5A3,3 0 0 1 1086.5,716.9V720.0Z" fill="#666666"/>
<rect x="872.5" y="713.9" width="214" height="37.5" rx="3" fill="none" stroke="#8c8c8c" stroke-width="1.4" stroke-opacity="0.95"/>
<text x="878.0" y="732.2" font-size="9.2" fill="#000">sldemo_mdlref_house.slxc</text>
<rect x="1177.5" y="298.9" width="214" height="37.5" rx="3" fill="#fff"/>
<path d="M1177.5,305.0V301.9A3,3 0 0 1 1180.5,298.9H1388.5A3,3 0 0 1 1391.5,301.9V305.0Z" fill="#666666"/>
<rect x="1177.5" y="298.9" width="214" height="37.5" rx="3" fill="none" stroke="#8c8c8c" stroke-width="1.4" stroke-opacity="0.95"/>
<text x="1183.0" y="317.2" font-size="9.2" fill="#000">sldemo_mdlref_thermostat.slxc</text>
<rect x="1177.5" y="464.9" width="214" height="37.5" rx="3" fill="#fff"/>
<path d="M1177.5,471.0V467.9A3,3 0 0 1 1180.5,464.9H1388.5A3,3 0 0 1 1391.5,467.9V471.0Z" fill="#666666"/>
<rect x="1177.5" y="464.9" width="214" height="37.5" rx="3" fill="none" stroke="#8c8c8c" stroke-width="1.4" stroke-opacity="0.95"/>
<text x="1183.0" y="483.2" font-size="9.2" fill="#000">sldemo_mdlref_F2C.slxc</text>
<circle cx="781.6" cy="403.5" r="5.3" fill="#fff" stroke="#858585" stroke-width="1.3"/>
<circle cx="781.6" cy="652.5" r="5.3" fill="#fff" stroke="#858585" stroke-width="1.3"/>
<circle cx="1087.6" cy="486.5" r="5.3" fill="#fff" stroke="#858585" stroke-width="1.3"/>
<circle cx="476.6" cy="445" r="5.3" fill="#fff" stroke="#858585" stroke-width="1.3"/>
<circle cx="1087.6" cy="320.5" r="5.3" fill="#fff" stroke="#858585" stroke-width="1.3"/>
<circle cx="781.6" cy="279" r="5.3" fill="#fff" stroke="#858585" stroke-width="1.3"/>
<circle cx="781.6" cy="486.5" r="5.3" fill="#fff" stroke="#858585" stroke-width="1.3"/></svg>

<!-- ===== right panel ===== -->
<div class="a" style="left:1416px;top:152px;width:1px;height:663px;background:#7a7a7a"></div>
<div class="a" style="left:1417px;top:152px;width:272px;height:663px;background:#f4f4f4"></div>
<div class="a" style="left:1417px;top:152px;width:272px;height:22px;background:#fff"></div>
<div class="t" style="left:1425px;top:157px;font-size:13px">Properties</div>

<div class="a" style="left:1417px;top:174px;width:272px;height:26px;background:#e6e6e6;border-top:2px solid #bdbdbd;border-bottom:1px solid #bdbdbd"></div>
<div class="a" style="left:1422px;top:186px;width:0;height:0;border-left:4px solid transparent;border-right:4px solid transparent;border-top:5px solid #111"></div>
<div class="t" style="left:1433px;top:181px;font-size:13px">Details</div>
<div class="t" style="left:1432px;top:215px;font-size:13px">Project</div>
<div class="t" style="left:1432px;top:238px;font-size:13px">Root</div>
<div class="t" style="left:1432px;top:261px;font-size:13px">File</div>
<div class="t" style="left:1432px;top:284px;font-size:13px">Path</div>
<div class="a" style="left:1532px;top:210px;width:142px;height:100px;overflow:hidden">
 <div class="t" style="left:0;top:5px;font-size:13px">ModelReferenceHierarchy</div>
 <div class="t" style="left:4px;top:28px;font-size:13px">&hellip;elReferenceHierarchy</div>
 <div class="t" style="left:0;top:51px;font-size:13px">sldemo_mdlref_depgraph</div>
 <div class="t" style="left:5px;top:74px;font-size:13px">&hellip;_mdlref_depgraph.slx</div>
</div>

<div class="a" style="left:1417px;top:312px;width:272px;height:25px;background:#e6e6e6;border-top:2px solid #bdbdbd;border-bottom:1px solid #bdbdbd"></div>
<div class="a" style="left:1422px;top:323px;width:0;height:0;border-left:4px solid transparent;border-right:4px solid transparent;border-top:5px solid #111"></div>
<div class="t" style="left:1433px;top:318px;font-size:13px">Products</div>
<div class="t" style="left:1432px;top:353px;font-size:13px">MATLAB</div>
<div class="t" style="left:1432px;top:377px;font-size:13px">Simulink</div>

<div class="a" style="left:1417px;top:405px;width:272px;height:26px;background:#e6e6e6;border-top:2px solid #bdbdbd;border-bottom:1px solid #bdbdbd"></div>
<div class="a" style="left:1422px;top:417px;width:0;height:0;border-left:4px solid transparent;border-right:4px solid transparent;border-top:5px solid #111"></div>
<div class="t" style="left:1433px;top:412px;font-size:13px">Problems</div>
<div class="t" style="left:1432px;top:446px;font-size:13px">Unsaved changes</div>
<div class="t" style="left:1432px;top:476px;font-size:13px;color:#2b73b6;text-decoration:underline">How to fix problems</div>
<div class="a" style="left:1417px;top:504px;width:272px;height:1px;background:#c4c4c4"></div>
<div class="a" style="left:1417px;top:175px;width:1px;height:640px;background:#f8f8f8"></div>
<div class="a" style="left:1688px;top:175px;width:1px;height:640px;background:#f0f0f0"></div>

<!-- ===== status bar ===== -->
<div class="a" style="left:1px;top:815px;width:1416px;height:1px;background:#8a8a8a"></div><div class="a" style="left:1417px;top:815px;width:272px;height:1px;background:#bdbdbd"></div>
<div class="a" style="left:1px;top:816px;width:235px;height:22px;background:#f5f5f5"></div>
<div class="a" style="left:237px;top:816px;width:71px;height:22px;background:#e6e6e6;border-right:1px solid #b8b8b8"></div>
<div class="t" style="left:245px;top:821px;font-size:12px;color:#1a1a1a">FILE LIST</div>
<div class="a" style="left:1417px;top:816px;width:272px;height:22px;background:#f5f5f5"></div>
<div class="a" style="left:1416px;top:815px;width:1px;height:23px;background:#7a7a7a"></div>
<svg style="left:6px;top:822px" width="12" height="11"><rect x="0.5" y="0" width="1.6" height="10" fill="#9a9a9a"/><polygon points="4,5 11,0 11,10" fill="#9a9a9a"/></svg>
<svg style="left:1400px;top:822px" width="11" height="11"><polygon points="5.5,0 11,6 0,6" fill="#9a9a9a"/><rect x="0" y="8" width="11" height="2" fill="#9a9a9a"/></svg>
<svg style="left:1673px;top:822px" width="11" height="11"><polygon points="0,0 7,5 0,10" fill="#9a9a9a"/><rect x="8.5" y="0" width="1.6" height="10" fill="#9a9a9a"/></svg>

</body></html>
